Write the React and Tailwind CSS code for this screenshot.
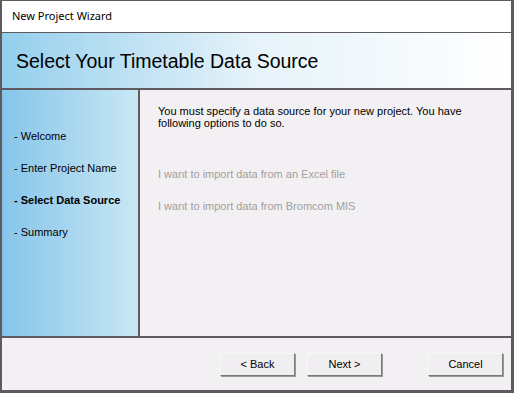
import React from "react";

const steps = [
  { label: "Welcome" },
  { label: "Enter Project Name" },
  { label: "Select Data Source", active: true },
  { label: "Summary" },
];

function WinButton({ children, className = "" }) {
  return (
    <button
      className={`w-[75px] h-[23px] bg-[#f0eef0] border border-t-[#f8f8f8] border-l-[#f8f8f8] border-r-[#7a7a7a] border-b-[#7a7a7a] shadow-[1px_1px_0_#9a9a9a] text-[11px] leading-[13px] text-black ${className}`}
    >
      {children}
    </button>
  );
}

export default function App() {
  return (
    <div
      className="w-[514px] h-[393px] flex flex-col bg-[#5e5a60] pl-[2px] pr-[3px] pb-[3px] pt-px"
      style={{ fontFamily: '"Liberation Sans", Arial, sans-serif' }}
    >
      {/* title bar */}
      <div
        className="h-[31px] bg-white flex items-center pl-[10px] text-[11px] text-black"
        style={{ fontFamily: '"Noto Sans", "Liberation Sans", sans-serif' }}
      >
        New Project Wizard
      </div>

      {/* header */}
      <div className="mt-px h-[55px] bg-gradient-to-r from-[#94cfec] via-[#e6f3fa] via-50% to-white flex items-center pl-[14px]">
        <h1 className="text-[19.5px] text-black pt-[2px]">Select Your Timetable Data Source</h1>
      </div>

      {/* body */}
      <div className="mt-[2px] flex h-[246px]">
        <div className="w-[136px] bg-gradient-to-r from-[#86c5ea] to-[#c8e7f5] flex flex-col pt-[38px] pl-[12px] gap-[18px] text-[11px] text-black">
          {steps.map((s) => (
            <div key={s.label} className={s.active ? "font-bold h-[14px]" : "h-[14px]"}>
              - {s.label}
            </div>
          ))}
        </div>
        <div className="ml-[2px] flex-1 bg-[#f2f0f2] pl-[18px] pt-[15px] text-[11px]">
          <p className="text-black leading-[12px]">
            You must specify a data source for your new project. You have
            <br />
            following options to do so.
          </p>
          <div className="mt-[37px] text-[#a0a0a0]">I want to import data from an Excel file</div>
          <div className="mt-[15px] text-[#a0a0a0]">I want to import data from Bromcom MIS</div>
        </div>
      </div>

      {/* footer */}
      <div className="mt-[2px] flex-1 bg-[#f2f0f2] flex items-start pt-[15px] pl-[218px]">
        <WinButton>&lt; Back</WinButton>
        <WinButton className="ml-[12px]">Next &gt;</WinButton>
        <WinButton className="ml-[46px]">Cancel</WinButton>
      </div>
    </div>
  );
}
